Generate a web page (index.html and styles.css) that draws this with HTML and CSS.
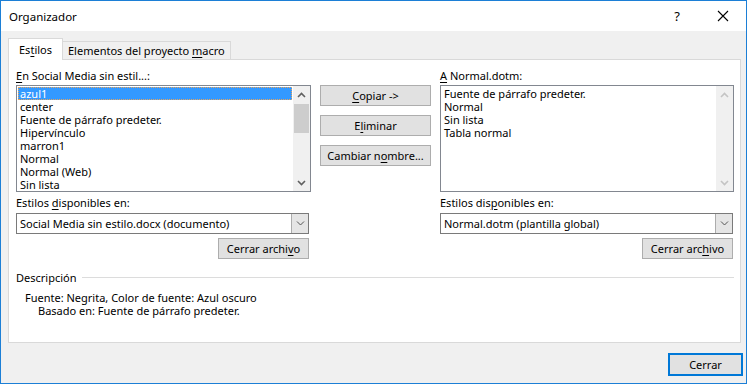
FILE: index.html
```html
<!DOCTYPE html>
<html>
<head>
    <title>Organizador</title>
    <link rel="stylesheet" href="styles.css">
</head>
<body>
    <div class="window">
        <div class="titlebar">
            <span class="title">Organizador</span>
            <span class="help">?</span>
            <span class="close">
                <svg width="12" height="12" viewBox="0 0 12 12"><path d="M1 1L11 11M11 1L1 11" stroke="#000" stroke-width="1.1" fill="none"/></svg>
            </span>
        </div>

        <div class="client">
            <div class="tabs">
                <div class="tab active">Es<u>t</u>ilos</div>
                <div class="tab">Elementos del proyecto <u>m</u>acro</div>
            </div>

            <div class="panel">
                <div class="columns">
                    <div class="side">
                        <div class="label"><u>E</u>n Social Media sin estil...:</div>
                        <div class="listbox">
                            <div class="items">
                                <div class="item selected">azul1</div>
                                <div class="item">center</div>
                                <div class="item">Fuente de párrafo predeter.</div>
                                <div class="item">Hipervínculo</div>
                                <div class="item">marron1</div>
                                <div class="item">Normal</div>
                                <div class="item">Normal (Web)</div>
                                <div class="item">Sin lista</div>
                            </div>
                            <div class="scrollbar">
                                <div class="arrow"><svg width="9" height="6" viewBox="0 0 9 6"><path d="M1 5L4.5 1.5L8 5" stroke="#606060" stroke-width="1.6" fill="none"/></svg></div>
                                <div class="track"><div class="thumb"></div></div>
                                <div class="arrow"><svg width="9" height="6" viewBox="0 0 9 6"><path d="M1 1L4.5 4.5L8 1" stroke="#606060" stroke-width="1.6" fill="none"/></svg></div>
                            </div>
                        </div>
                        <div class="label tall">Estilos <u>d</u>isponibles en:</div>
                        <div class="combo">
                            <span class="combo-text">Social Media sin estilo.docx (documento)</span>
                            <span class="combo-btn"><svg width="9" height="5" viewBox="0 0 9 5"><path d="M1 0.5L4.5 4L8 0.5" stroke="#555" stroke-width="1" fill="none"/></svg></span>
                        </div>
                        <div class="button-row">
                            <button class="btn close-file">Cerrar archi<u>v</u>o</button>
                        </div>
                    </div>

                    <div class="middle">
                        <button class="btn"><u>C</u>opiar -&gt;</button>
                        <button class="btn">E<u>l</u>iminar</button>
                        <button class="btn">Cambiar n<u>o</u>mbre...</button>
                    </div>

                    <div class="side">
                        <div class="label"><u>A</u> Normal.dotm:</div>
                        <div class="listbox">
                            <div class="items">
                                <div class="item">Fuente de párrafo predeter.</div>
                                <div class="item">Normal</div>
                                <div class="item">Sin lista</div>
                                <div class="item">Tabla normal</div>
                            </div>
                            <div class="scrollbar disabled">
                                <div class="arrow"><svg width="9" height="6" viewBox="0 0 9 6"><path d="M1 5L4.5 1.5L8 5" stroke="#c4c4c4" stroke-width="1.6" fill="none"/></svg></div>
                                <div class="track"></div>
                                <div class="arrow"><svg width="9" height="6" viewBox="0 0 9 6"><path d="M1 1L4.5 4.5L8 1" stroke="#c4c4c4" stroke-width="1.6" fill="none"/></svg></div>
                            </div>
                        </div>
                        <div class="label tall">Estilos dis<u>p</u>onibles en:</div>
                        <div class="combo">
                            <span class="combo-text">Normal.dotm (plantilla global)</span>
                            <span class="combo-btn"><svg width="9" height="5" viewBox="0 0 9 5"><path d="M1 0.5L4.5 4L8 0.5" stroke="#555" stroke-width="1" fill="none"/></svg></span>
                        </div>
                        <div class="button-row">
                            <button class="btn close-file">Cerrar arc<u>h</u>ivo</button>
                        </div>
                    </div>
                </div>

                <div class="description">
                    <div class="desc-title">
                        <span>Descripción</span>
                        <span class="rule"></span>
                    </div>
                    <div class="desc-line">Fuente: Negrita, Color de fuente: Azul oscuro</div>
                    <div class="desc-line indent">Basado en: Fuente de párrafo predeter.</div>
                </div>
            </div>

            <div class="footer">
                <button class="btn default">Cerrar</button>
            </div>
        </div>
    </div>
</body>
</html>
```

FILE: styles.css
```css
body {
    margin: 0;
    background-color: #ffffff;
    font-family: "Noto Sans", "Liberation Sans", sans-serif;
    font-size: 11px;
    color: #000000;
}

u {
    text-underline-offset: 2px;
}

.window {
    width: 747px;
    height: 384px;
    box-sizing: border-box;
    border: 1px solid #1c7fd6;
    display: flex;
    flex-direction: column;
}

.titlebar {
    height: 30px;
    background-color: #ffffff;
    display: flex;
    align-items: center;
    padding-left: 8px;
}

.title {
    font-size: 11.5px;
    flex: 1;
}

.help {
    font-size: 13px;
    width: 46px;
    text-align: center;
}

.close {
    width: 46px;
    display: flex;
    justify-content: center;
}

.client {
    flex: 1;
    background-color: #f0f0f0;
    padding-top: 7px;
}

.tabs {
    display: flex;
    align-items: flex-end;
    margin-left: 7px;
    height: 21px;
}

.tab {
    height: 18px;
    line-height: 17px;
    padding: 0 5px;
    border: 1px solid #d9d9d9;
    border-bottom: none;
    background-color: #f0f0f0;
    margin-left: -1px;
    box-sizing: border-box;
}

.tab.active {
    height: 22px;
    line-height: 21px;
    width: 55px;
    text-align: center;
    padding: 0;
    margin-left: 0;
    margin-bottom: -1px;
    background-color: #ffffff;
    position: relative;
    z-index: 1;
}

.panel {
    margin: 0 5px 0 7px;
    height: 284px;
    box-sizing: border-box;
    border: 1px solid #d9d9d9;
    background-color: #ffffff;
    padding: 9px 6px 0 7px;
}

.columns {
    display: grid;
    grid-template-columns: 295px 1fr 294px;
    column-gap: 9px;
}

.label {
    height: 16px;
    line-height: 14px;
}

.label.tall {
    height: 21px;
    line-height: 21px;
}

.listbox {
    height: 107px;
    box-sizing: border-box;
    border: 1px solid #828790;
    background-color: #ffffff;
    display: flex;
}

.items {
    flex: 1;
    padding: 1px;
}

.item {
    height: 13px;
    line-height: 13px;
    padding-left: 2px;
    white-space: nowrap;
}

.item.selected {
    background-color: #3399ff;
    color: #ffffff;
    outline: 1px dotted #e8a35a;
    outline-offset: -1px;
}

.scrollbar {
    width: 17px;
    background-color: #f0f0f0;
    display: flex;
    flex-direction: column;
}

.arrow {
    height: 17px;
    display: flex;
    align-items: center;
    justify-content: center;
}

.track {
    flex: 1;
    padding: 1px 1px 0 1px;
}

.thumb {
    height: 29px;
    background-color: #cdcdcd;
}

.combo {
    width: 293px;
    height: 21px;
    box-sizing: border-box;
    border: 1px solid #7a7a7a;
    background-color: #ffffff;
    display: flex;
}

.combo-text {
    flex: 1;
    line-height: 19px;
    padding-left: 3px;
}

.combo-btn {
    width: 16px;
    background-color: #e5e5e5;
    border-left: 1px solid #acacac;
    display: flex;
    align-items: center;
    justify-content: center;
}

.button-row {
    width: 293px;
    display: flex;
    justify-content: flex-end;
    margin-top: 4px;
}

.btn {
    font-family: "Noto Sans", "Liberation Sans", sans-serif;
    font-size: 11px;
    color: #000000;
    background-color: #e1e1e1;
    border: 1px solid #adadad;
    height: 21px;
    padding: 0;
    box-sizing: border-box;
}

.close-file {
    width: 91px;
}

.middle {
    display: flex;
    flex-direction: column;
    gap: 9px;
    padding-top: 16px;
}

.description {
    margin-top: 10px;
}

.desc-title {
    display: flex;
    align-items: center;
    height: 16px;
    margin-bottom: 6px;
}

.rule {
    flex: 1;
    height: 1px;
    background-color: #dcdcdc;
    margin-left: 5px;
}

.desc-line {
    height: 13px;
    line-height: 13px;
    padding-left: 9px;
}

.desc-line.indent {
    padding-left: 22px;
}

.footer {
    display: flex;
    justify-content: flex-end;
    padding: 10px 3px 0 0;
}

.btn.default {
    width: 75px;
    height: 23px;
    border: 2px solid #0078d7;
}
```
